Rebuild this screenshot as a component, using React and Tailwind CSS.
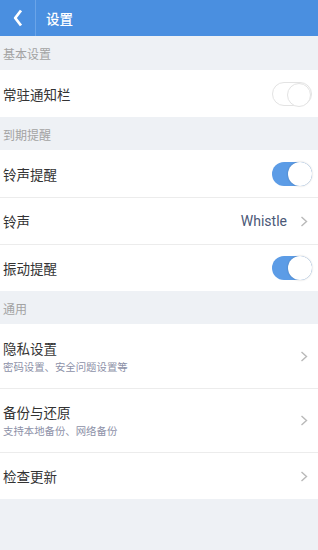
import React from "react";

const Toggle = ({ on }) => (
  <div
    className={`relative h-[24px] w-[40px] rounded-full ${
      on ? "bg-[#5c9ce6]" : "border border-[#e3e3e3] bg-white"
    }`}
  >
    <div
      className={`absolute right-0 top-0 h-[24px] w-[24px] rounded-full bg-white ${
        on
          ? "shadow-[0_0_2px_rgba(0,0,0,0.25)]"
          : "-right-px -top-px border border-[#e3e3e3]"
      }`}
    />
  </div>
);

const Chevron = () => (
  <svg width="8" height="11" viewBox="0 0 8 11" className="mr-[10px]">
    <path
      d="M1.5 1l5 4.5-5 4.5"
      fill="none"
      stroke="#b9b9b9"
      strokeWidth="1.4"
    />
  </svg>
);

const SectionLabel = ({ children, h = "h-[33px]" }) => (
  <div className={`flex items-center pl-[3px] pt-[2px] text-[12px] text-[#a3a3a3] ${h}`}>
    {children}
  </div>
);

const Row = ({ title, sub, right, first }) => (
  <div
    className={`flex items-center justify-between bg-white pl-[3px] ${
      first ? "" : "border-t border-[#ececec]"
    } ${sub ? "h-[64px]" : "h-[47px]"}`}
  >
    <div className="flex flex-col">
      <span className="text-[13.5px] leading-[18px] text-[#333]">{title}</span>
      {sub && (
        <span className="mt-[3px] text-[10.4px] leading-[14px] text-[#8d91a8]">
          {sub}
        </span>
      )}
    </div>
    {right}
  </div>
);

const ToggleSlot = ({ on }) => (
  <div className="mr-[6px]">
    <Toggle on={on} />
  </div>
);

export default function App() {
  return (
    <div
      className="min-h-[550px] w-[318px] bg-[#eef1f5]"
      style={{ fontFamily: '"Noto Sans CJK SC", "Noto Sans", sans-serif' }}
    >
      <div className="flex h-[36px] items-center bg-[#4a8fe0]">
        <div className="flex h-full w-[36px] items-center justify-center border-r border-[#6aa4e8]">
          <svg width="10" height="18" viewBox="0 0 10 18">
            <path
              d="M8 1.5L2.2 9 8 16.5"
              fill="none"
              stroke="white"
              strokeWidth="2.8"
              strokeLinejoin="round"
            />
          </svg>
        </div>
        <span className="ml-[10px] text-[13.5px] font-medium text-white">设置</span>
      </div>

      <SectionLabel h="h-[34px]">基本设置</SectionLabel>
      <Row first title="常驻通知栏" right={<ToggleSlot on={false} />} />

      <SectionLabel>到期提醒</SectionLabel>
      <Row first title="铃声提醒" right={<ToggleSlot on />} />
      <Row
        title="铃声"
        right={
          <div className="flex items-center">
            <span
              className="mr-[13px] text-[14px] text-[#4b5877]"
              style={{ fontFamily: "Roboto, sans-serif" }}
            >
              Whistle
            </span>
            <Chevron />
          </div>
        }
      />
      <Row title="振动提醒" right={<ToggleSlot on />} />

      <SectionLabel>通用</SectionLabel>
      <Row first title="隐私设置" sub="密码设置、安全问题设置等" right={<Chevron />} />
      <Row title="备份与还原" sub="支持本地备份、网络备份" right={<Chevron />} />
      <Row title="检查更新" right={<Chevron />} />
    </div>
  );
}
